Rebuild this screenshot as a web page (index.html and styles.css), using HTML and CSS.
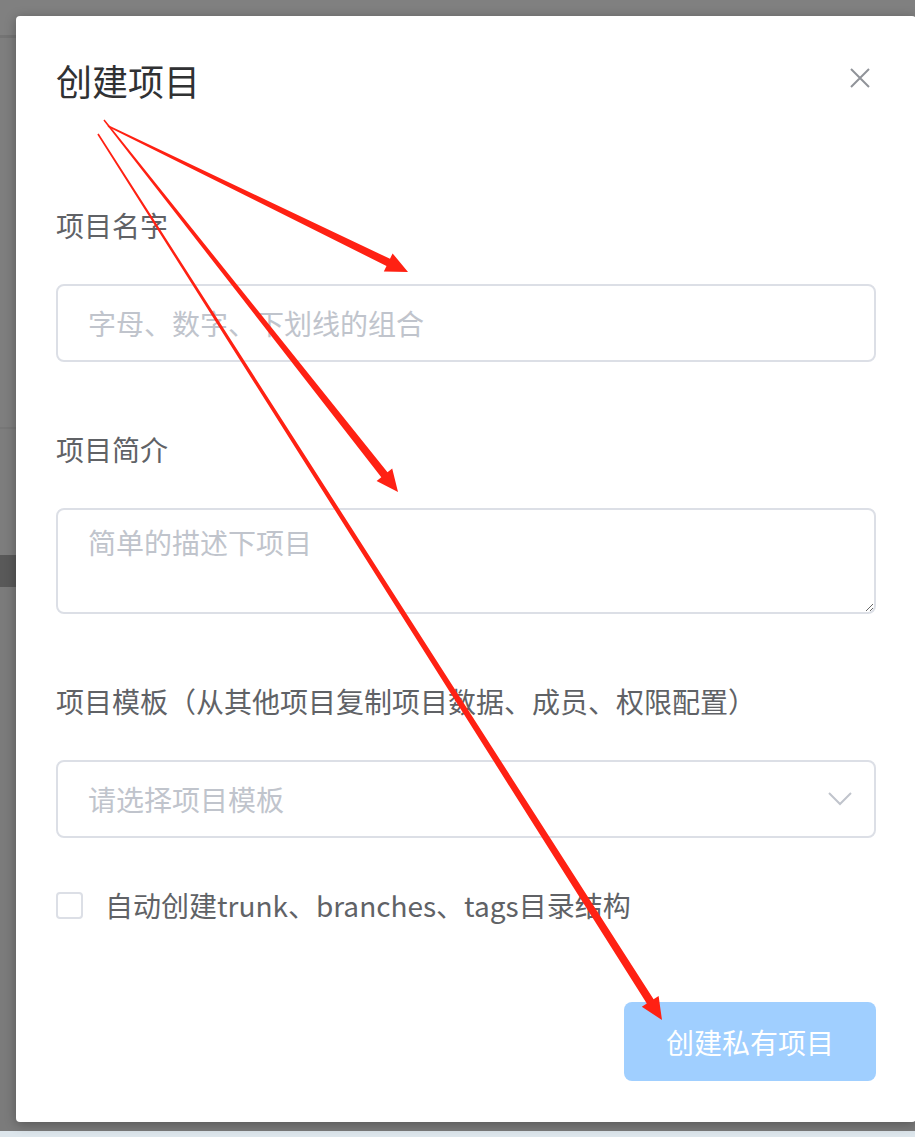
FILE: index.html
```html
<!DOCTYPE html>
<html lang="zh-CN">
<head>
    <meta charset="UTF-8">
    <meta name="viewport" content="width=device-width, initial-scale=1.0">
    <title>创建项目</title>
    <link rel="stylesheet" href="styles.css">
</head>
<body>
    <div class="dialog">
        <div class="dialog-header">
            <span class="dialog-title">创建项目</span>
            <svg class="dialog-close" width="20" height="20" viewBox="0 0 20 20">
                <path d="M1 1 L19 19 M19 1 L1 19" />
            </svg>
        </div>

        <div class="dialog-body">
            <div class="form-item">
                <label class="form-label">项目名字</label>
                <input class="form-input" type="text" placeholder="字母、数字、下划线的组合">
            </div>
            <div class="form-item">
                <label class="form-label">项目简介</label>
                <textarea class="form-textarea" placeholder="简单的描述下项目"></textarea>
            </div>
            <div class="form-item">
                <label class="form-label">项目模板（从其他项目复制项目数据、成员、权限配置）</label>
                <div class="form-select">
                    <span class="select-placeholder">请选择项目模板</span>
                    <svg class="select-arrow" width="24" height="14" viewBox="0 0 24 14">
                        <path d="M1 1 L12 12 L23 1" />
                    </svg>
                </div>
            </div>
            <div class="form-item check-item">
                <span class="checkbox"></span>
                <span class="check-text">自动创建trunk、branches、tags目录结构</span>
            </div>
        </div>

        <div class="dialog-footer">
            <button class="btn-primary" disabled>创建私有项目</button>
        </div>
    </div>

    <!-- red annotation arrows -->
    <svg class="annotations" width="915" height="1137" viewBox="0 0 915 1137">
        <polygon points="108.35,125.28 390.0,258.8 392.6,253.4 408,272 383.8,271.4 386.5,266.0 107.65,126.72" />
        <polygon points="104.6,119.5 387.5,472.2 392.2,468.5 398,492 376.6,480.9 381.3,477.2 103.4,120.5" />
        <polygon points="98.7,133.6 653.6,999.3 658.6,996.0 662,1020 641.8,1006.8 646.8,1003.5 97.3,134.4" />
    </svg>
</body>
</html>
```

FILE: styles.css
```css
body {
    margin: 0;
    padding: 16px 0 0 16px;
    min-height: 1137px;
    box-sizing: border-box;
    position: relative;
    overflow: hidden;
    font-family: "Noto Sans CJK SC", "Noto Sans", sans-serif;
    /* page behind the dim overlay, only the left strip shows */
    background: linear-gradient(to bottom,
        #808080 0 35px,
        #747474 35px 38px,
        #7e7e7e 38px 427px,
        #777777 427px 429px,
        #7d7d7d 429px 555px,
        #595959 555px 587px,
        #7b7b7b 587px 1131px,
        #dde6ec 1131px);
}

.dialog {
    width: 900px;
    background-color: #fff;
    border-radius: 4px;
    box-shadow: 0 2px 12px rgba(0, 0, 0, 0.3);
}

.dialog-header {
    display: flex;
    align-items: center;
    justify-content: space-between;
    padding: 40px 40px 0;
}
.dialog-title {
    font-size: 36px;
    line-height: 49px;
    color: #303133;
}
.dialog-close {
    margin: 0 6px 5px 0;
}
.dialog-close path {
    stroke: #909399;
    stroke-width: 2;
    fill: none;
}

.dialog-body {
    padding: 100px 40px 0;
}
.form-item {
    display: flex;
    flex-direction: column;
    margin-bottom: 67px;
}
.form-label {
    font-size: 28px;
    line-height: 40px;
    color: #606266;
    margin-bottom: 39px;
}
.form-input,
.form-textarea,
.form-select {
    box-sizing: border-box;
    width: 100%;
    border: 2px solid #dcdfe6;
    border-radius: 8px;
    background-color: #fff;
    font-family: inherit;
    font-size: 28px;
    color: #606266;
    outline: none;
}
.form-input {
    height: 78px;
    padding: 0 30px;
}
.form-textarea {
    height: 106px;
    padding: 11px 30px;
    line-height: 42px;
    resize: vertical;
    display: block;
}
.form-input::placeholder,
.form-textarea::placeholder {
    color: #c0c4cc;
}
.form-select {
    height: 78px;
    padding: 0 22px 0 30px;
    display: flex;
    align-items: center;
    justify-content: space-between;
}
.select-placeholder {
    color: #c0c4cc;
}
.select-arrow path {
    stroke: #c0c4cc;
    stroke-width: 2;
    fill: none;
}

.check-item {
    flex-direction: row;
    align-items: center;
    margin-top: -20px;
    margin-bottom: 0;
    height: 40px;
}
.checkbox {
    box-sizing: border-box;
    width: 27px;
    height: 27px;
    border: 2px solid #dcdfe6;
    border-radius: 4px;
    margin-right: 22px;
}
.check-text {
    font-size: 28px;
    line-height: 36px;
    color: #606266;
}

.dialog-footer {
    display: flex;
    justify-content: flex-end;
    padding: 77px 40px 41px;
}
.btn-primary {
    width: 252px;
    height: 79px;
    border: none;
    border-radius: 8px;
    background-color: #a0cfff;
    color: #fff;
    font-family: inherit;
    font-size: 28px;
}

.annotations {
    position: absolute;
    top: 0;
    left: 0;
    pointer-events: none;
}
.annotations polygon {
    fill: #ff2113;
}
```
